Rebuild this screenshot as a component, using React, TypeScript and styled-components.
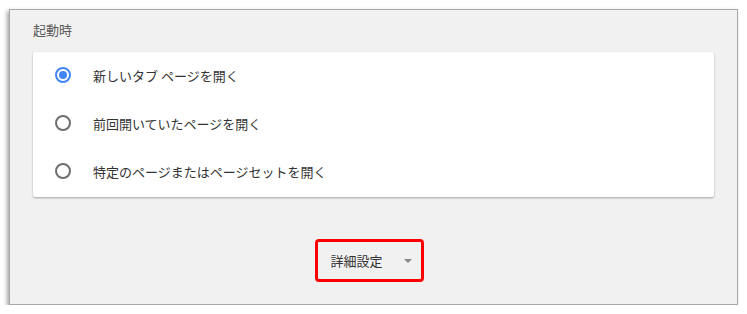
import React, { useState } from "react";
import styled, { createGlobalStyle } from "styled-components";

const Global = createGlobalStyle`
  html, body { margin: 0; padding: 0; background: #ffffff; }
  body { font-family: "Noto Sans CJK JP", "Noto Sans", sans-serif; }
`;

const Frame = styled.div`
  box-sizing: border-box;
  margin: 9px 0 0 9px;
  width: 729px;
  height: 296px;
  background: #f1f1f1;
  border: 1px solid #a8a8a8;
  box-shadow: -2px 2px 4px rgba(0, 0, 0, 0.35);
  padding: 0 23px;
  display: flex;
  flex-direction: column;
`;

const Heading = styled.div`
  box-sizing: border-box;
  height: 42px;
  display: flex;
  align-items: center;
  font-size: 13px;
  color: #5a5a5a;
  padding-bottom: 3px;
`;

const Card = styled.div`
  background: #ffffff;
  border-radius: 2px;
  box-shadow: 0 1px 2px rgba(0, 0, 0, 0.25), 0 1px 3px rgba(0, 0, 0, 0.08);
  display: flex;
  flex-direction: column;
  padding: 0 0 1px;
`;

const Row = styled.label`
  height: 48px;
  display: flex;
  align-items: center;
  padding-left: 22px;
  padding-bottom: 2px;
  box-sizing: border-box;
  gap: 22px;
  font-size: 13px;
  color: #333333;
  cursor: pointer;
`;

const Radio = styled.span<{ $checked: boolean }>`
  box-sizing: border-box;
  width: 16px;
  height: 16px;
  border-radius: 50%;
  border: 2px solid ${(p) => (p.$checked ? "#4285f4" : "#6e6e6e")};
  display: flex;
  align-items: center;
  justify-content: center;
  &::after {
    content: "";
    width: 8px;
    height: 8px;
    border-radius: 50%;
    background: ${(p) => (p.$checked ? "#4285f4" : "transparent")};
  }
`;

const Footer = styled.div`
  flex: 1;
  display: flex;
  justify-content: center;
  align-items: flex-start;
  padding-top: 42px;
  padding-right: 9px;
`;

const AdvancedButton = styled.button`
  box-sizing: border-box;
  width: 109px;
  height: 43px;
  border: 3px solid #ff0000;
  border-radius: 4px;
  background: transparent;
  display: flex;
  align-items: center;
  padding: 0 0 0 13px;
  font-family: inherit;
  font-size: 13px;
  color: #333333;
  cursor: pointer;
`;

const Label = styled.span`
  width: 73px;
  text-align: left;
`;

const Caret = styled.span`
  width: 0;
  height: 0;
  border-left: 4px solid transparent;
  border-right: 4px solid transparent;
  border-top: 4px solid #8a8a8a;
  margin-top: 1px;
`;

const options = [
  "新しいタブ ページを開く",
  "前回開いていたページを開く",
  "特定のページまたはページセットを開く",
];

export default function App() {
  const [sel, setSel] = useState(0);
  return (
    <>
      <Global />
      <Frame>
        <Heading>起動時</Heading>
        <Card>
          {options.map((o, i) => (
            <Row key={o} onClick={() => setSel(i)}>
              <Radio $checked={sel === i} />
              {o}
            </Row>
          ))}
        </Card>
        <Footer>
          <AdvancedButton>
            <Label>詳細設定</Label>
            <Caret />
          </AdvancedButton>
        </Footer>
      </Frame>
    </>
  );
}
